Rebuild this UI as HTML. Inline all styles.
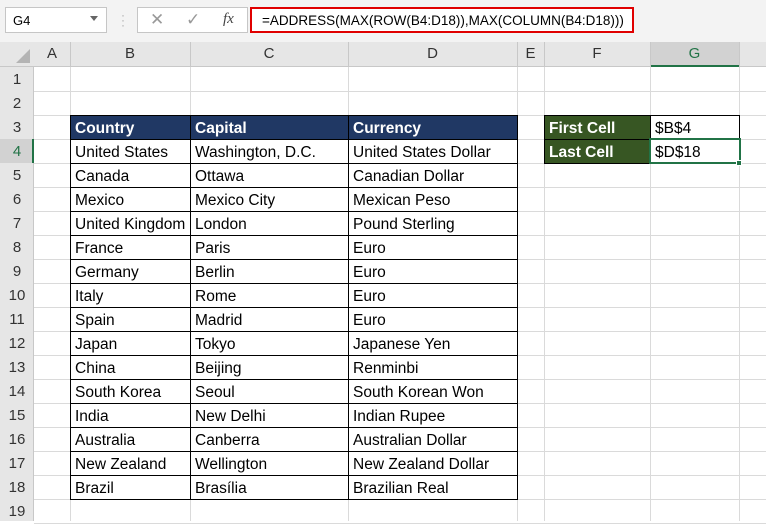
<!DOCTYPE html>
<html><head><style>
*{margin:0;padding:0;box-sizing:border-box}
body{width:766px;height:521px;overflow:hidden;background:#fff;font-family:"Liberation Sans",sans-serif;position:relative}
.tb{position:absolute;left:0;top:0;width:766px;height:42px;background:#f3f3f3}
.nb{position:absolute;left:5px;top:7px;width:102px;height:26px;background:#fff;border:1px solid #c6c6c6;font-size:13px;padding:5px 0 0 7px}
.fx{position:absolute;left:137px;top:7px;width:111px;height:26px;background:#fff;border:1px solid #c6c6c6}
.fb{position:absolute;left:250px;top:7px;width:384px;height:26px;background:#fff;border:2px solid #e00000;font-size:13.5px;padding:4px 0 0 10px;white-space:nowrap}
.g{position:absolute;font-size:15.5px;white-space:nowrap}
.h{position:absolute;background:#e6e6e6;color:#333;font-size:15px;text-align:center}
.v{position:absolute;top:42px;width:1px;height:479px;background:#dadada}
.r{position:absolute;left:0;width:766px;height:1px;background:#dadada}
</style></head><body>
<div class="tb"></div>
<div class="nb">G4<span style="position:absolute;right:8px;top:8px;border-left:4px solid transparent;border-right:4px solid transparent;border-top:5px solid #666"></span></div>
<div style="position:absolute;left:121px;top:13px;color:#aaa;font-size:12px;line-height:5px">·<br>·<br>·</div>
<div class="fx"><span style="position:absolute;left:12px;top:2px;color:#999;font-size:17px">✕</span><span style="position:absolute;left:48px;top:2px;color:#999;font-size:17px">✓</span><span style="position:absolute;left:85px;top:3px;font-family:'Liberation Serif';font-style:italic;font-size:15px;color:#444">fx</span></div>
<div class="fb">=ADDRESS(MAX(ROW(B4:D18)),MAX(COLUMN(B4:D18)))</div>
<div class="h" style="left:0;top:42px;width:766px;height:25px;border-bottom:1px solid #c8c8c8"></div>
<div class="h" style="left:0;top:67px;width:34px;height:454px;border-right:1px solid #c8c8c8"></div>
<div style="position:absolute;left:16px;top:49px;border-left:14px solid transparent;border-bottom:14px solid #b4b4b4"></div>
<div class="h" style="left:650px;top:42px;width:89px;height:25px;background:#d2d2d2;border-bottom:2px solid #217346"></div>
<div class="h" style="left:0;top:139px;width:34px;height:24px;background:#d2d2d2;border-right:2px solid #217346"></div>
<div id="cols"></div>
<script>
var cx=[[34,70,'A'],[70,190,'B'],[190,348,'C'],[348,517,'D'],[517,544,'E'],[544,650,'F'],[650,739,'G']];
var s='';
cx.forEach(function(c){s+='<div class="g" style="left:'+c[0]+'px;top:45px;width:'+(c[1]-c[0])+'px;text-align:center;font-size:15px;color:'+(c[2]=='G'?'#217346':'#333')+'">'+c[2]+'</div>';s+='<div class="v" style="left:'+c[1]+'px;background:#c8c8c8;height:25px"></div><div class="v" style="left:'+c[1]+'px;top:67px;height:454px"></div>';});
for(var i=1;i<=19;i++){var y=67+(i-1)*24;s+='<div class="g" style="left:0;top:'+(y+4)+'px;width:34px;text-align:center;font-size:15px;color:'+(i==4?'#217346':'#333')+'">'+i+'</div>';s+='<div class="r" style="top:'+(y+24)+'px;left:34px"></div>';}
var d=[["Country","Capital","Currency"],["United States","Washington, D.C.","United States Dollar"],["Canada","Ottawa","Canadian Dollar"],["Mexico","Mexico City","Mexican Peso"],["United Kingdom","London","Pound Sterling"],["France","Paris","Euro"],["Germany","Berlin","Euro"],["Italy","Rome","Euro"],["Spain","Madrid","Euro"],["Japan","Tokyo","Japanese Yen"],["China","Beijing","Renminbi"],["South Korea","Seoul","South Korean Won"],["India","New Delhi","Indian Rupee"],["Australia","Canberra","Australian Dollar"],["New Zealand","Wellington","New Zealand Dollar"],["Brazil","Brasília","Brazilian Real"]];
var L=[70,190,348],W=[120,158,169];
d.forEach(function(r,k){var y=115+k*24;r.forEach(function(t,j){var h=k==0;s+='<div class="g" style="left:'+L[j]+'px;top:'+y+'px;width:'+(W[j]+1)+'px;height:25px;border:1px solid #000;padding:4px 0 0 4px;overflow:hidden;'+(h?'background:#203864;color:#fff;font-weight:bold;':'background:#fff;')+'">'+t+'</div>';});});
[["First Cell","$B$4"],["Last Cell","$D$18"]].forEach(function(r,k){var y=115+k*24;s+='<div class="g" style="left:544px;top:'+y+'px;width:107px;height:25px;border:1px solid #000;background:#375623;color:#fff;font-weight:bold;padding:4px 0 0 4px">'+r[0]+'</div><div class="g" style="left:650px;top:'+y+'px;width:90px;height:25px;border:1px solid #000;background:#fff;padding:4px 0 0 4px">'+r[1]+'</div>';});
s+='<div style="position:absolute;left:649px;top:138px;width:92px;height:26px;border:2px solid #217346"></div><div style="position:absolute;left:736px;top:160px;width:6px;height:6px;background:#217346;border:1px solid #fff"></div>';
document.getElementById('cols').outerHTML=s;
</script>
</body></html>
